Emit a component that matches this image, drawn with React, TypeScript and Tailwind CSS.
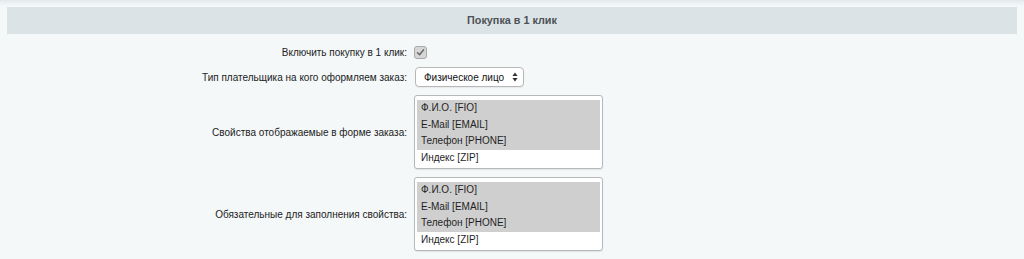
const props = ['Ф.И.О. [FIO]', 'E-Mail [EMAIL]', 'Телефон [PHONE]', 'Индекс [ZIP]'];

function ListBox() {
  return (
    <div className="w-[189px] h-[74px] rounded-[3px] border border-[#b5b9bb] bg-white px-[2px] pt-[4px] pb-[2px] shadow-[0_1px_1px_rgba(0,0,0,0.08)]">
      {props.map((p, i) => (
        <div
          key={p}
          className={`h-[16.5px] leading-[16.5px] pl-[4px] text-[10px] text-[#1f1f1f] whitespace-nowrap ${i < 3 ? 'bg-[#cfcfcf]' : ''}`}
        >
          {p}
        </div>
      ))}
    </div>
  );
}

function Row({ label, children, h }: { label: string; children: React.ReactNode; h: string }) {
  return (
    <div className={`flex items-center ${h}`}>
      <div className="w-[407px] shrink-0 pr-[7px] text-right text-[10px] text-[#222] whitespace-nowrap">{label}</div>
      <div className="flex-1">{children}</div>
    </div>
  );
}

export default function App() {
  return (
    <div
      className="w-[1024px] h-[259px] overflow-hidden bg-[#f4f8f9]"
      style={{ fontFamily: '"Liberation Sans", Arial, sans-serif' }}
    >
      <div className="h-[6px] bg-gradient-to-b from-[#e4eaec] to-[#f4f8f9]" />
      <div className="mx-[7px] mt-[1px] h-[27px] flex items-center justify-center bg-[#dce3e6] text-[10.8px] font-bold text-[#4b5255]">
        Покупка в 1 клик
      </div>
      <div className="pl-[7px] pt-[11px]">
        <Row label="Включить покупку в 1 клик:" h="h-[14px]">
          <div className="w-[13px] h-[13px] rounded-[3px] border border-[#a9a9a9] bg-[#d6d6d6] flex items-center justify-center">
            <svg width="9" height="9" viewBox="0 0 9 9">
              <path d="M1.5 4.8 L3.6 6.8 L7.6 1.8" fill="none" stroke="#666" strokeWidth="1.4" strokeLinecap="round" strokeLinejoin="round" />
            </svg>
          </div>
        </Row>
        <div className="h-[8px]" />
        <Row label="Тип плательщика на кого оформляем заказ:" h="h-[20px]">
          <div className="ml-[1px] w-[109px] h-[20px] rounded-[4px] border border-[#b8b8b8] bg-white flex items-center justify-between pl-[8px] pr-[5px] text-[10px] text-[#111] whitespace-nowrap shadow-[0_1px_1px_rgba(0,0,0,0.06)]">
            <span>Физическое лицо</span>
            <svg width="6" height="10" viewBox="0 0 6 10">
              <path d="M3 0.5 L5.6 4 H0.4 Z M3 9.5 L5.6 6 H0.4 Z" fill="#333" />
            </svg>
          </div>
        </Row>
        <div className="h-[8px]" />
        <Row label="Свойства отображаемые в форме заказа:" h="h-[74px]">
          <ListBox />
        </Row>
        <div className="h-[8px]" />
        <Row label="Обязательные для заполнения свойства:" h="h-[74px]">
          <ListBox />
        </Row>
      </div>
    </div>
  );
}
